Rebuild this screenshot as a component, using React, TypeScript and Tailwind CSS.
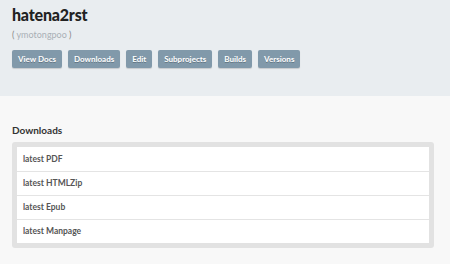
import React from 'react';

const buttons = ['View Docs', 'Downloads', 'Edit', 'Subprojects', 'Builds', 'Versions'];
const downloads = ['latest PDF', 'latest HTMLZip', 'latest Epub', 'latest Manpage'];

export default function App() {
  return (
    <div className="h-[264px] w-[450px] overflow-hidden bg-[#f8f8f8] font-['Lato',sans-serif]">
      {/* project header */}
      <div className="h-[96px] bg-[#e9edf0] px-3 pt-[5px]">
        <h1 className="text-[16px] font-black leading-[20px] tracking-[-0.2px] text-[#222]">hatena2rst</h1>
        <p className="mt-[4px] text-[9px] leading-[12px] text-[#888]">
          ( <span className="text-[#a9b0b6]">ymotongpoo</span> )
        </p>
        <div className="mt-[9px] flex gap-[6px]">
          {buttons.map((b) => (
            <a
              key={b}
              className="flex h-[18px] items-center rounded-[2px] bg-[#8199aa] px-[6px] text-[8px] font-bold text-white shadow-[0_1px_1px_rgba(0,0,0,0.15)] [text-shadow:0_1px_0_rgba(0,0,0,0.25)]"
            >
              {b}
            </a>
          ))}
        </div>
      </div>

      {/* downloads */}
      <div className="px-3 pt-[27px]">
        <h2 className="text-[10px] font-bold leading-[14px] text-[#333]">Downloads</h2>
        <div className="mt-[5px] w-[422px] rounded-[3px] bg-[#e2e2e2] p-[5px]">
          <ul className="bg-white">
            {downloads.map((d, i) => (
              <li
                key={d}
                className={`flex h-[24px] items-center px-[6px] text-[8.5px] font-bold text-[#555] ${i > 0 ? 'border-t border-[#e4e4e4]' : ''}`}
              >
                {d}
              </li>
            ))}
          </ul>
        </div>
      </div>
    </div>
  );
}
